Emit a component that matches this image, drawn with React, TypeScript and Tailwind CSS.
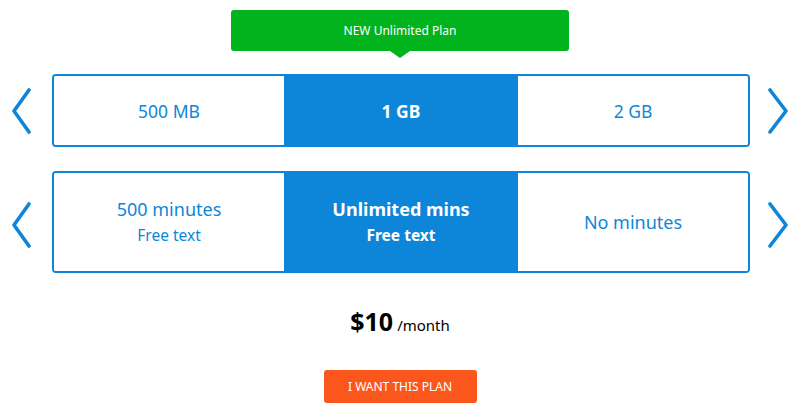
import React, { useState } from 'react';

const BLUE = 'text-[#0d86da]';

const Chevron = ({ dir, shift }: { dir: 'left' | 'right'; shift?: boolean }) => (
  <button
    className={`h-full flex items-center shrink-0 ${
      dir === 'left' ? 'w-[52px] pl-[10px]' : 'w-[50px] pl-[17px]'
    } ${shift ? 'pt-[6px]' : ''}`}
  >
    <svg width="22" height="46" viewBox="0 0 22 46" fill="none">
      <path
        d={dir === 'left' ? 'M19 2 L4 23 L19 44' : 'M3 2 L19 23 L3 44'}
        stroke="#0d86da"
        strokeWidth="3.6"
        strokeLinecap="round"
        strokeLinejoin="round"
      />
    </svg>
  </button>
);

interface Option {
  title: string;
  sub?: string;
}

const OptionRow = ({ options, height, big }: { options: Option[]; height: string; big?: boolean }) => {
  const [selected, setSelected] = useState(1);
  return (
    <div className={`flex items-center ${height}`}>
      <Chevron dir="left" shift={big} />
      <div className="flex-1 h-full flex border-2 border-[#0d86da] rounded-[4px] overflow-hidden">
        {options.map((o, i) => (
          <button
            key={o.title}
            onClick={() => setSelected(i)}
            className={`flex flex-col items-center justify-center ${
              i === 1 ? 'w-[234px] shrink-0' : 'flex-1'
            } ${i === selected ? 'bg-[#0d86da] text-white font-bold' : `bg-white ${BLUE}`}`}
          >
            <span className={big ? 'text-[18px] leading-[26px]' : 'text-[17.5px] leading-6'}>{o.title}</span>
            {o.sub && <span className="text-[15.5px] leading-[26px]">{o.sub}</span>}
          </button>
        ))}
      </div>
      <Chevron dir="right" shift={big} />
    </div>
  );
};

export default function App() {
  return (
    <div
      className="w-[800px] h-[412px] bg-white flex flex-col overflow-hidden"
      style={{ fontFamily: '"Source Sans Pro", "Noto Sans", sans-serif' }}
    >
      <div className="flex justify-center pt-[10px]">
        <div className="relative w-[338px] h-[41px] bg-[#01b31d] rounded-[3px] flex items-center justify-center text-white text-[12px]">
          NEW Unlimited Plan
          <div className="absolute left-1/2 -translate-x-1/2 top-full w-0 h-0 border-l-[10px] border-r-[10px] border-t-[7px] border-l-transparent border-r-transparent border-t-[#01b31d]" />
        </div>
      </div>

      <div className="mt-[23px]">
        <OptionRow
          height="h-[73px]"
          options={[{ title: '500 MB' }, { title: '1 GB' }, { title: '2 GB' }]}
        />
      </div>

      <div className="mt-[24px]">
        <OptionRow
          height="h-[102px]"
          big
          options={[
            { title: '500 minutes', sub: 'Free text' },
            { title: 'Unlimited mins', sub: 'Free text' },
            { title: 'No minutes' },
          ]}
        />
      </div>

      <div className="mt-[32px] flex justify-center items-baseline text-black">
        <span className="text-[25px] font-bold leading-8">$10</span>
        <span className="text-[15px] ml-1">/month</span>
      </div>

      <div className="mt-[33px] flex justify-center">
        <button className="w-[153px] h-[33px] bg-[#fb561b] rounded-[3px] text-white text-[12px] uppercase">
          I want this plan
        </button>
      </div>
    </div>
  );
}
